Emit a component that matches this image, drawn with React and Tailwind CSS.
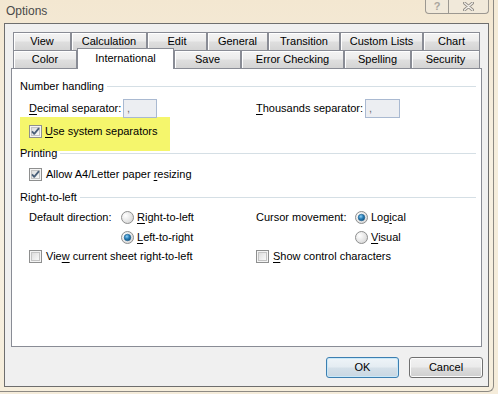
import React from "react";

const FONT = { fontFamily: '"Liberation Sans", Arial, sans-serif' };

const ROW1 = [
  ["View", 58],
  ["Calculation", 76],
  ["Edit", 60],
  ["General", 61],
  ["Transition", 72],
  ["Custom Lists", 83],
  ["Chart", 57],
];

const ROW2 = [
  ["Color", 64],
  ["International", 97, true],
  ["Save", 67],
  ["Error Checking", 103],
  ["Spelling", 67],
  ["Security", 69],
];

function Tab({ label, width, selected }) {
  if (selected) {
    return (
      <div
        style={{ width }}
        className="relative z-10 -mb-px flex h-[21px] items-start justify-center border border-b-0 border-[#898c95] bg-white pt-[3px] leading-[13px]"
      >
        {label}
      </div>
    );
  }
  return (
    <div
      style={{ width }}
      className="flex h-full items-center justify-center border border-b-0 border-[#898c95] bg-[linear-gradient(#f4f4f4,#ececec_45%,#dedede_55%,#d4d4d4)] leading-[13px] shadow-[inset_1px_1px_0_#fff]"
    >
      {label}
    </div>
  );
}

function Underlined({ text, at }) {
  return (
    <span>
      {text.slice(0, at)}
      <span className="underline underline-offset-[2px]">{text[at]}</span>
      {text.slice(at + 1)}
    </span>
  );
}

function Checkbox({ checked }) {
  return (
    <svg width="13" height="13" viewBox="0 0 13 13" className="shrink-0">
      <defs>
        <linearGradient id="cbfill" x1="0" y1="0" x2="1" y2="1">
          <stop offset="0" stopColor="#dcdcdc" />
          <stop offset="1" stopColor="#fbfbfb" />
        </linearGradient>
      </defs>
      <rect x="0.5" y="0.5" width="12" height="12" fill="#f4f4f4" stroke="#8e8f8f" />
      <rect x="2.5" y="2.5" width="8" height="8" fill="url(#cbfill)" stroke="#c4c4c4" />
      {checked && (
        <path
          d="M3 6.4 L5.2 8.8 L10 3.2"
          fill="none"
          stroke="#4a5f78"
          strokeWidth="1.8"
          strokeLinejoin="round"
        />
      )}
    </svg>
  );
}

function Radio({ checked }) {
  return (
    <svg width="13" height="13" viewBox="0 0 13 13" className="shrink-0">
      <defs>
        <radialGradient id="rfill" cx="0.35" cy="0.35" r="0.8">
          <stop offset="0" stopColor="#ffffff" />
          <stop offset="1" stopColor="#d2d2d2" />
        </radialGradient>
        <radialGradient id="rdot" cx="0.4" cy="0.35" r="0.7">
          <stop offset="0" stopColor="#8fd0f6" />
          <stop offset="0.5" stopColor="#2a7fb8" />
          <stop offset="1" stopColor="#0e4e7c" />
        </radialGradient>
      </defs>
      <circle cx="6.5" cy="6.5" r="6" fill="url(#rfill)" stroke="#8e8f8f" />
      {checked && <circle cx="6.5" cy="6.5" r="3.3" fill="url(#rdot)" stroke="#1d5f8e" strokeWidth="0.6" />}
    </svg>
  );
}

function GroupHeader({ title, className = "" }) {
  return (
    <div className={`flex h-4 items-center gap-[3px] pr-[5px] leading-4 ${className}`}>
      <span>{title}</span>
      <div className="h-px flex-1 bg-[#d5dfe5]" />
    </div>
  );
}

function SepInput({ width }) {
  return (
    <div
      style={{ width }}
      className="flex h-[19px] items-center border border-[#a9b9d1] bg-[#eceef2] pl-[3px] text-[#6d6d6d] leading-none"
    >
      ,
    </div>
  );
}

function Button({ children, primary }) {
  return (
    <button
      className={`flex h-[21px] items-center justify-center rounded-[3px] border leading-none ${
        primary
          ? "w-[73px] border-[#3c7fb1] bg-[linear-gradient(#eef4f8,#e4ecf2_48%,#d4e0e9_52%,#c9d7e2)] shadow-[inset_0_0_0_1px_#c9e8f8]"
          : "w-[74px] border-[#707070] bg-[linear-gradient(#f2f2f2,#ebebeb_48%,#dddddd_52%,#cfcfcf)] shadow-[inset_0_0_0_1px_#fcfcfc]"
      }`}
    >
      {children}
    </button>
  );
}

export default function App() {
  return (
    <div
      style={FONT}
      className="h-[394px] w-[498px] overflow-hidden bg-[linear-gradient(180deg,#f4ead6,#f6eedd_30%,#f5ecda)] text-[11px] text-black"
    >
      <div className="h-[392px] w-[494px] rounded-br-[6px] border-r border-b border-[#8d8a84] bg-[linear-gradient(180deg,#f3e7d1,#f7f0e1_40%,#f6eedc)]">
        {/* TITLE BAR */}
        <div className="flex h-[23px] items-start justify-between">
          <span className="pl-[6px] pt-[4px] text-[12px] leading-[14px] text-[#4a4a4a]">Options</span>
          <div className="mr-[4px] flex h-[14px]">
            <div className="flex w-[24px] items-center justify-center rounded-bl-[4px] border border-t-0 border-[#9c9891] bg-[#f1e9da] text-[11px] font-bold leading-none text-[#a9a59e]">
              ?
            </div>
            <div className="flex w-[40px] items-center justify-center rounded-br-[4px] border border-t-0 border-l-0 border-[#9c9891] bg-[#f1e9da]">
              <svg width="11" height="9" viewBox="0 0 11 9">
                <path d="M1.5 1 L9.5 8 M9.5 1 L1.5 8" stroke="#8f8b85" strokeWidth="3" strokeLinecap="round" />
                <path d="M1.5 1 L9.5 8 M9.5 1 L1.5 8" stroke="#f4f0ea" strokeWidth="1.3" strokeLinecap="round" />
              </svg>
            </div>
          </div>
        </div>

        {/* CLIENT AREA */}
        <div className="ml-[4px] flex h-[364px] w-[485px] flex-col border border-[#6e6e6e] bg-[#f0f0f0]">
          {/* TABS */}
          <div className="ml-[8px] mt-[8px] flex flex-col">
            <div className="flex h-[18px]">
              {ROW1.map(([label, w]) => (
                <Tab key={label} label={label} width={w} />
              ))}
            </div>
            <div className="flex h-[18px] items-end">
              {ROW2.map(([label, w, sel]) => (
                <Tab key={label} label={label} width={w} selected={sel} />
              ))}
            </div>
          </div>

          {/* PANEL */}
          <div className="relative ml-[6px] h-[279px] w-[471px] border border-[#898c95] bg-white pl-[8px] pt-[9px]">
            {/* highlighter mark */}
            <div className="absolute left-[8px] top-[48px] h-[34px] w-[150px] bg-[#f5f66c]" />

            <div className="relative flex flex-col">
              <GroupHeader title="Number handling" />

              <div className="mt-[5px] grid grid-cols-[227px_1fr] pl-[9px]">
                <div className="flex items-center">
                  <span className="w-[94px]">
                    <Underlined text="Decimal separator:" at={0} />
                  </span>
                  <SepInput width={34} />
                </div>
                <div className="flex items-center">
                  <span className="w-[109px]">
                    <Underlined text="Thousands separator:" at={0} />
                  </span>
                  <SepInput width={35} />
                </div>
              </div>

              <div className="mt-[5px] flex h-4 items-center gap-[3px] pl-[9px]">
                <Checkbox checked />
                <Underlined text="Use system separators" at={0} />
              </div>

              <GroupHeader title="Printing" className="mt-[6px]" />

              <div className="mt-[5px] flex h-4 items-center gap-[4px] pl-[9px]">
                <Checkbox checked />
                <Underlined text="Allow A4/Letter paper resizing" at={22} />
              </div>

              <GroupHeader title="Right-to-left" className="mt-[7px]" />

              <div className="mt-[4px] grid grid-cols-[227px_1fr] pl-[9px]">
                <div className="flex flex-col gap-[4px]">
                  <div className="flex h-4 items-center">
                    <span className="w-[92px]">Default direction:</span>
                    <Radio />
                    <span className="ml-[3px]">
                      <Underlined text="Right-to-left" at={0} />
                    </span>
                  </div>
                  <div className="flex h-4 items-center">
                    <span className="w-[92px]" />
                    <Radio checked />
                    <span className="ml-[3px]">
                      <Underlined text="Left-to-right" at={0} />
                    </span>
                  </div>
                  <div className="-mt-px flex h-4 items-center gap-[4px]">
                    <Checkbox />
                    <Underlined text="View current sheet right-to-left" at={3} />
                  </div>
                </div>
                <div className="flex flex-col gap-[4px]">
                  <div className="flex h-4 items-center">
                    <span className="w-[99px]">Cursor movement:</span>
                    <Radio checked />
                    <span className="ml-[3px]">
                      <Underlined text="Logical" at={3} />
                    </span>
                  </div>
                  <div className="flex h-4 items-center">
                    <span className="w-[99px]" />
                    <Radio />
                    <span className="ml-[3px]">
                      <Underlined text="Visual" at={0} />
                    </span>
                  </div>
                  <div className="-mt-px flex h-4 items-center gap-[4px]">
                    <Checkbox />
                    <Underlined text="Show control characters" at={0} />
                  </div>
                </div>
              </div>
            </div>
          </div>

          {/* BUTTONS */}
          <div className="mt-[10px] flex justify-end gap-[10px] pr-[5px]">
            <Button primary>OK</Button>
            <Button>Cancel</Button>
          </div>
        </div>
      </div>
    </div>
  );
}
